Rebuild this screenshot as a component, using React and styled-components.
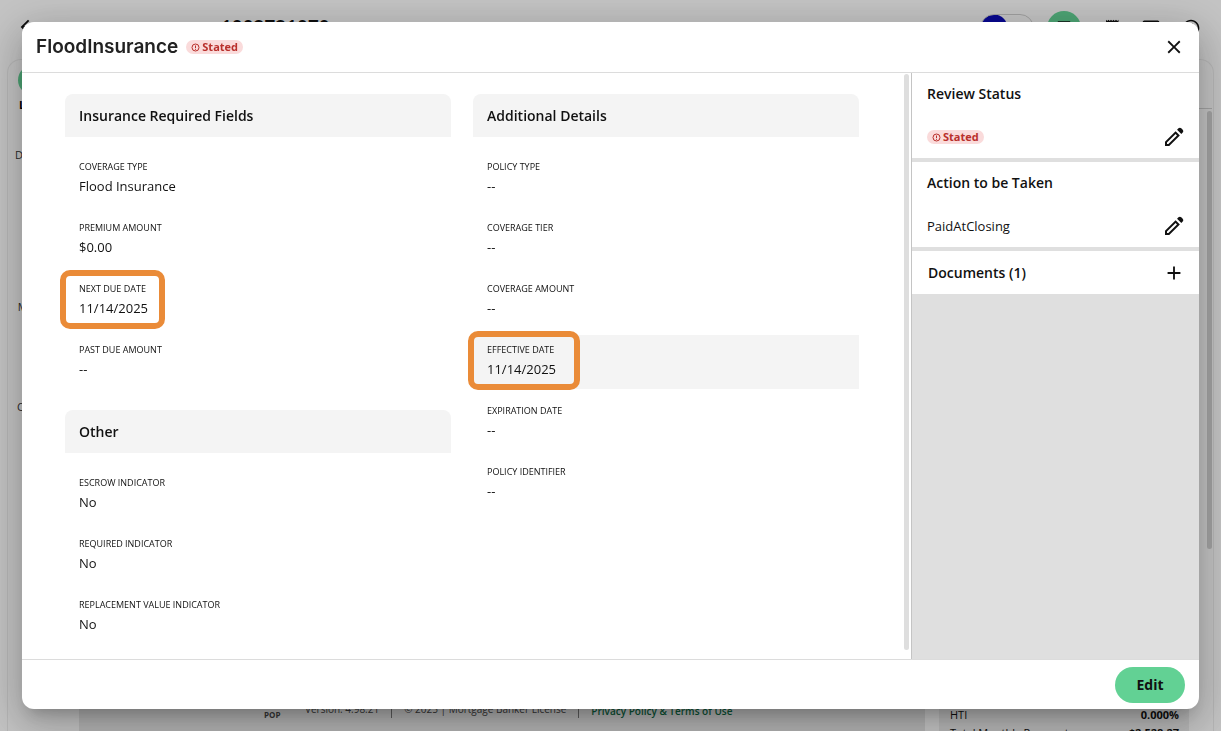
import React from 'react';
import styled, { createGlobalStyle } from 'styled-components';
import {
  MdAdd,
  MdArrowBack,
  MdChatBubble,
  MdClose,
  MdHelpOutline,
  MdOutlineMonitor,
  MdOutlineReceiptLong,
} from 'react-icons/md';

const GlobalStyle = createGlobalStyle`
  *, *::before, *::after {
    box-sizing: border-box;
  }

  body {
    margin: 0;
    overflow: hidden;
    color: #111;
    background: #fafafa;
    font-family: 'Open Sans', 'Noto Sans', sans-serif;
    font-size: 13px;
    line-height: 20px;
  }

  h1, h2, dl, dd, p {
    margin: 0;
  }

  button {
    font-family: inherit;
    cursor: pointer;
  }
`;

/* ---------- page behind the dialog ---------- */

const Page = styled.div`
  height: 100vh;
  display: flex;
  flex-direction: column;
  overflow: hidden;
`;

const TopBar = styled.header`
  flex: none;
  height: 56px;
  padding: 0 20px 0 17px;
  display: flex;
  align-items: center;
  gap: 20px;
`;

const LoanTitle = styled.div`
  flex: 1;
  padding-bottom: 2px;
  display: flex;
  align-items: center;
  gap: 182px;
  font-size: 19px;
  font-weight: 600;
`;

const Actions = styled.div`
  display: flex;
  align-items: center;
  gap: 13px;
`;

const Toggle = styled.span`
  width: 54px;
  height: 28px;
  border: 1px solid #ccc;
  border-radius: 14px;
  background: radial-gradient(circle at 13px 13px, #0b0bb8 13px, transparent 14px);
`;

const RoundIcon = styled.span`
  flex: none;
  width: 34px;
  height: 34px;
  display: grid;
  place-items: center;
  border-radius: 50%;
  background: #62d194;
`;

const Workspace = styled.div`
  flex: 1;
  min-height: 0;
  margin: 3px 7px 0;
  padding-right: 1px;
  display: flex;
  border: 1px solid #e9e9e9;
  border-bottom: 0;
  border-radius: 14px 14px 0 0;
`;

const SideNav = styled.nav`
  width: 71px;
  padding: 5px 22px 0 0;
  display: flex;
  flex-direction: column;
  align-items: center;
  font-size: 11px;
`;

const NavBadge = styled.span`
  width: 30px;
  height: 30px;
  border-radius: 50%;
  background: #62d194;
`;

const NavItem = styled.span`
  margin-top: ${({ $space }) => $space || 0}px;
  color: ${({ $active }) => ($active ? '#000' : '#333')};
  font-weight: ${({ $active }) => ($active ? 700 : 400)};
`;

const Content = styled.div`
  flex: 1;
  display: flex;
  align-items: flex-end;
`;

const PageFooter = styled.footer`
  flex: 1;
  height: 32px;
  padding-right: 16px;
  display: flex;
  align-items: flex-start;
  justify-content: center;
  gap: 12px;
  background: #e4e4e4;
  font-size: 10px;
  color: #444;
`;

const Brand = styled.span`
  padding: 2px 4px 0 0;
  display: flex;
  flex-direction: column;
  align-items: center;
  font-size: 8px;
  font-weight: 700;
  line-height: 9px;
`;

const Divider = styled.span`
  width: 1px;
  height: 19px;
  background: #777;
`;

const FooterLink = styled.a`
  color: #0d6a44;
  font-weight: 600;
  line-height: 24px;
  text-decoration: none;
`;

const Summary = styled.dl`
  width: 250px;
  height: 32px;
  margin-left: 14px;
  padding: 7px 10px 0 11px;
  background: #e9e9e9;
  font-size: 11px;
  line-height: 18px;
`;

const SummaryRow = styled.div`
  display: flex;
  justify-content: space-between;

  dd {
    font-weight: 700;
  }
`;

const Rail = styled.div`
  width: 23px;
`;

const RailTop = styled.div`
  height: 49px;
  border-bottom: 1px solid #cfcfcf;
`;

const PageThumb = styled.div`
  width: 5px;
  height: 438px;
  margin: 2px 0 0 auto;
  border-radius: 3px;
  background: #d0d0d0;
`;

/* ---------- dialog ---------- */

const Backdrop = styled.div`
  position: fixed;
  inset: 0;
  padding: 22px;
  display: flex;
  background: rgba(0, 0, 0, 0.22);
`;

const Dialog = styled.section`
  flex: 1;
  min-width: 0;
  display: flex;
  flex-direction: column;
  overflow: hidden;
  border-radius: 12px;
  background: #fff;
  box-shadow: 0 11px 15px -7px rgba(0, 0, 0, 0.2), 0 14px 38px 3px rgba(0, 0, 0, 0.14),
    0 9px 46px 8px rgba(0, 0, 0, 0.12);
`;

const DialogHeader = styled.header`
  flex: none;
  height: 51px;
  padding: 0 13px 0 14px;
  display: flex;
  align-items: center;
  gap: 8px;
  border-bottom: 1px solid #dcdcdc;
`;

const Title = styled.h1`
  font-family: Inter, 'Open Sans', sans-serif;
  font-size: 19px;
  font-weight: 600;
  line-height: 24px;
  color: #222;
`;

const Chip = styled.span`
  height: 14px;
  padding: 0 5px;
  display: inline-flex;
  align-items: center;
  gap: 2px;
  border-radius: 7px;
  background: #fadbdb;
  color: #b9302c;
  font-size: 11px;
  font-weight: 700;
  line-height: 14px;
`;

const IconButton = styled.button`
  width: 24px;
  height: 24px;
  margin-left: auto;
  padding: 0;
  display: grid;
  place-items: center;
  border: 0;
  background: none;
  color: #111;
`;

const DialogBody = styled.div`
  flex: 1;
  min-height: 0;
  display: flex;
`;

const Main = styled.main`
  flex: 1;
  min-width: 0;
  padding: 21px 43px 0;
  display: grid;
  grid-template-columns: 1fr 1fr;
  align-items: start;
  column-gap: 22px;
  overflow: hidden;
`;

const ScrollThumb = styled.span`
  width: 5px;
  margin: 1px 2px 9px;
  border-radius: 3px;
  background: #dedede;
`;

const Column = styled.div`
  display: flex;
  flex-direction: column;
  gap: 21px;
`;

const SectionTitle = styled.h2`
  font-size: 14px;
  font-weight: 600;
  line-height: 20px;
`;

const SectionHeader = styled.div`
  margin-bottom: 15px;
  padding: 12px 14px 11px;
  border-radius: 8px 8px 0 0;
  background: #f4f4f4;
`;

const FieldList = styled.dl`
  display: flex;
  flex-direction: column;
  gap: 7px;
`;

const FieldRow = styled.div`
  position: relative;
  height: 54px;
  padding: 8px 14px;
  background: ${({ $hovered }) => ($hovered ? '#f4f4f4' : 'none')};
`;

const FieldLabel = styled.dt`
  font-size: 9px;
  line-height: 14px;
  text-transform: uppercase;
`;

const FieldValue = styled.dd`
  padding-top: 2px;
`;

const Callout = styled.span`
  position: absolute;
  top: -4px;
  bottom: -1px;
  left: -5px;
  width: ${({ $width }) => $width}px;
  border: 6px solid #ea8b38;
  border-radius: 10px;
`;

const Aside = styled.aside`
  width: 288px;
  display: flex;
  flex-direction: column;
  gap: 4px;
  border-left: 1px solid #c4c4c4;
  background: #dfdfdf;
`;

const Card = styled.section`
  padding: 11px 13px 9px 15px;
  background: #fff;
`;

const CardRow = styled.div`
  min-height: 24px;
  display: flex;
  align-items: center;

  ${SectionTitle} + & {
    margin-top: 21px;
  }
`;

const DocumentsCard = styled(Card)`
  padding: 10px 13px 9px 16px;
`;

const DialogFooter = styled.footer`
  flex: none;
  height: 50px;
  padding: 0 14px;
  display: flex;
  align-items: center;
  justify-content: flex-end;
  border-top: 1px solid #dcdcdc;
`;

const EditButton = styled.button`
  width: 70px;
  height: 36px;
  padding: 0;
  border: 0;
  border-radius: 18px;
  background: #62d194;
  color: #111;
  font-size: 14px;
  font-weight: 700;
`;

const requiredFields = [
  { label: 'Coverage Type', value: 'Flood Insurance' },
  { label: 'Premium Amount', value: '$0.00' },
  { label: 'Next Due Date', value: '11/14/2025', callout: 105 },
  { label: 'Past Due Amount', value: '--' },
];

const otherFields = [
  { label: 'Escrow Indicator', value: 'No' },
  { label: 'Required Indicator', value: 'No' },
  { label: 'Replacement Value Indicator', value: 'No' },
];

const additionalFields = [
  { label: 'Policy Type', value: '--' },
  { label: 'Coverage Tier', value: '--' },
  { label: 'Coverage Amount', value: '--' },
  { label: 'Effective Date', value: '11/14/2025', callout: 112, hovered: true },
  { label: 'Expiration Date', value: '--' },
  { label: 'Policy Identifier', value: '--' },
];

const StatusChip = () => (
  <Chip>
    <svg width="9" height="9" viewBox="0 0 9 9" fill="none" stroke="currentColor" aria-hidden="true">
      <circle cx="4.5" cy="4.5" r="3.5" />
      <path d="M4.5 2.5v2.5M4.5 5.8v1" />
    </svg>
    Stated
  </Chip>
);

const PencilIcon = () => (
  <svg width="24" height="24" viewBox="0 0 24 24" fill="currentColor" aria-hidden="true">
    <path d="M5 19h1.4l8.6-8.6L13.6 9 5 17.6V19Zm-2 2v-4.25L13.6 6.15l4.25 4.25L7.25 21H3Z" />
    <path d="m19.3 8.95-4.25-4.2 1.4-1.4q.58-.57 1.41-.57.84 0 1.42.57l1.4 1.4q.57.58.6 1.39.02.81-.55 1.39L19.3 8.95Z" />
  </svg>
);

const FieldSection = ({ title, fields }) => (
  <section>
    <SectionHeader>
      <SectionTitle>{title}</SectionTitle>
    </SectionHeader>
    <FieldList>
      {fields.map(({ label, value, callout, hovered }) => (
        <FieldRow key={label} $hovered={hovered}>
          <FieldLabel>{label}</FieldLabel>
          <FieldValue>{value}</FieldValue>
          {callout && <Callout $width={callout} />}
        </FieldRow>
      ))}
    </FieldList>
  </section>
);

const AppPage = () => (
  <Page aria-hidden="true">
    <TopBar>
      <LoanTitle>
        <MdArrowBack size={22} />
        <span>1002721070</span>
      </LoanTitle>
      <Actions>
        <Toggle />
        <RoundIcon>
          <MdChatBubble size={16} />
        </RoundIcon>
      </Actions>
      <MdOutlineReceiptLong size={20} />
      <MdOutlineMonitor size={20} />
      <MdHelpOutline size={20} />
    </TopBar>
    <Workspace>
      <SideNav>
        <NavBadge />
        <NavItem $active>Loan</NavItem>
        <NavItem $space={30}>Details</NavItem>
        <NavItem $space={132}>Menu</NavItem>
        <NavItem $space={80}>Credit</NavItem>
      </SideNav>
      <Content>
        <PageFooter>
          <Brand>
            <span>CHANGE</span>
            <span>POP</span>
          </Brand>
          <span>Version: 4.98.21</span>
          <Divider />
          <span>© 2025 | Mortgage Banker License</span>
          <Divider />
          <FooterLink href="#terms">Privacy Policy &amp; Terms of Use</FooterLink>
        </PageFooter>
        <Summary>
          <SummaryRow>
            <dt>HTI</dt>
            <dd>0.000%</dd>
          </SummaryRow>
          <SummaryRow>
            <dt>Total Monthly Payment</dt>
            <dd>$2,528.27</dd>
          </SummaryRow>
        </Summary>
      </Content>
      <Rail>
        <RailTop />
        <PageThumb />
      </Rail>
    </Workspace>
  </Page>
);

const App = () => (
  <>
    <GlobalStyle />
    <AppPage />
    <Backdrop>
      <Dialog role="dialog" aria-modal="true" aria-labelledby="dialog-title">
        <DialogHeader>
          <Title id="dialog-title">FloodInsurance</Title>
          <StatusChip />
          <IconButton type="button" aria-label="Close">
            <MdClose size={22} />
          </IconButton>
        </DialogHeader>
        <DialogBody>
          <Main>
            <Column>
              <FieldSection title="Insurance Required Fields" fields={requiredFields} />
              <FieldSection title="Other" fields={otherFields} />
            </Column>
            <Column>
              <FieldSection title="Additional Details" fields={additionalFields} />
            </Column>
          </Main>
          <ScrollThumb />
          <Aside>
            <Card>
              <SectionTitle>Review Status</SectionTitle>
              <CardRow>
                <StatusChip />
                <IconButton type="button" aria-label="Edit review status">
                  <PencilIcon />
                </IconButton>
              </CardRow>
            </Card>
            <Card>
              <SectionTitle>Action to be Taken</SectionTitle>
              <CardRow>
                PaidAtClosing
                <IconButton type="button" aria-label="Edit action to be taken">
                  <PencilIcon />
                </IconButton>
              </CardRow>
            </Card>
            <DocumentsCard>
              <CardRow>
                <SectionTitle>Documents (1)</SectionTitle>
                <IconButton type="button" aria-label="Add document">
                  <MdAdd size={22} />
                </IconButton>
              </CardRow>
            </DocumentsCard>
          </Aside>
        </DialogBody>
        <DialogFooter>
          <EditButton type="button">Edit</EditButton>
        </DialogFooter>
      </Dialog>
    </Backdrop>
  </>
);

export default App;
